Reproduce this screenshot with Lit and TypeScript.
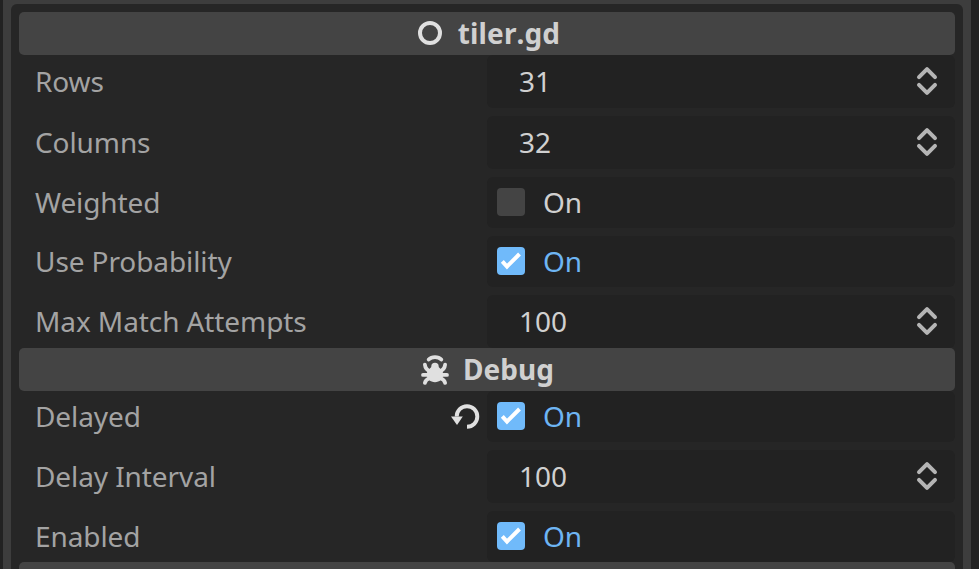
import { LitElement, html, css, svg, nothing } from "lit";
import { customElement, property } from "lit/decorators.js";

const icons = {
  node: svg`<circle cx="16" cy="16" r="10" fill="none" stroke="#e0e0e0" stroke-width="4"/>`,
  debug: svg`<g fill="none" stroke="#e0e0e0" stroke-width="3.8" stroke-linecap="round">
      <path d="M9.700 6.600C12.700 3.200 19.300 3.200 22.300 6.600"/>
      <path d="M5.900 11.600C6.200 15.400 8 17.500 12 18.500M26.100 11.600C25.800 15.400 24 17.500 20 18.500"/>
      <path d="M4 21.900H28"/>
      <path d="M5.900 29.900C6.200 27.600 8.500 26 11 25M26.100 29.900C25.800 27.600 23.500 26 21 25"/>
    </g>
    <path d="M12.300 13.500a3.700 3.700 0 0 1 7.400 0c0 1.700 4.500 3.300 4.500 8 0 4.300-3.600 7.700-8.200 7.700s-8.200-3.400-8.200-7.700c0-4.700 4.500-6.300 4.500-8z" fill="#e0e0e0"/>`,
};

@customElement("section-header")
class SectionHeader extends LitElement {
  @property() icon: keyof typeof icons | "" = "";
  @property() label = "";
  static styles = css`
    :host {
      display: flex;
      align-items: center;
      justify-content: center;
      height: 43px;
      flex: none;
      padding-right: 1px;
      border-radius: 5px;
      background: #444;
      color: #d0d0d0;
      font-weight: 700;
      font-kerning: none;
      gap: 12px;
      box-sizing: border-box;
    }
    :host([icon="node"]) { letter-spacing: 0.12px; padding-right: 0; }
    svg { width: 32px; height: 32px; flex: none; margin-bottom: 1px; }
    span { padding-bottom: 2px; }
  `;
  render() {
    return html`${this.icon ? html`<svg viewBox="0 0 32 32">${icons[this.icon]}</svg>` : nothing}<span>${this.label}</span>`;
  }
}

@customElement("property-row")
class PropertyRow extends LitElement {
  @property() label = "";
  @property({ attribute: false }) value: number | boolean = 0;
  @property({ type: Boolean }) changed = false;
  static styles = css`
    :host { display: flex; flex: none; }
    .name { width: 468px; box-sizing: border-box; padding: 0 7px 0 16px; display: flex; align-items: center; justify-content: space-between; color: #a3a3a3; letter-spacing: -0.09px; }
    .field { flex: 1; display: flex; align-items: center; border-radius: 6px; background: #222; color: #d0d0d0; }
    .number { height: 53px; padding: 0 16px 0 32px; justify-content: space-between; }
    .bool { height: 51px; padding-left: 10px; gap: 18px; }
    .checked { color: #6eb5f3; }
    .box { width: 28px; height: 28px; margin-bottom: 1px; border-radius: 4px; background: #444; }
    .checked .box { background: #70bafa; }
    span { padding-bottom: 2px; }
    svg { display: block; flex: none; }
    .revert, .spin { margin-bottom: 1px; }
  `;
  render() {
    const revert = html`<svg class="revert" width="30" height="30" viewBox="0 0 30 30">
      <path d="M6.700 15.500A10.300 10.300 0 1 1 17 25.800" fill="none" stroke="#e0e0e0" stroke-width="3.900"/>
      <path d="M1 15.500H12.800L7 24z" fill="#e0e0e0"/></svg>`;
    const field =
      typeof this.value === "boolean"
        ? html`<div class="field bool ${this.value ? "checked" : ""}">
            <div class="box">${this.value
              ? html`<svg width="28" height="28" viewBox="0 0 28 28"><path d="M5.300 14.400L10 19.500L22.500 7" fill="none" stroke="#fff" stroke-width="4"/></svg>`
              : nothing}</div><span>On</span></div>`
        : html`<div class="field number"><span>${this.value}</span>
            <svg class="spin" width="24" height="32" viewBox="0 0 24 32"><path d="M4 12.200L12 4.200L20 12.200M4 19.800L12 27.800L20 19.800" fill="none" stroke="#b5b5b5" stroke-width="4" stroke-linecap="round" stroke-linejoin="round"/></svg></div>`;
    return html`<div class="name"><span>${this.label}</span>${this.changed ? revert : nothing}</div>${field}`;
  }
}

type Row = [string, number | boolean, boolean?];

@customElement("app-root")
class AppRoot extends LitElement {
  static styles = css`
    :host {
      display: flex;
      width: 979px;
      height: 569px;
      box-sizing: border-box;
      padding: 0 8px 0 3px;
      overflow: hidden;
      background: #222;
      font: 28px/38px "Noto Sans", sans-serif;
    }
    .frame { flex: 1; padding: 4px 8px 0; background: #3d3d3d; }
    .inspector { height: 600px; box-sizing: border-box; padding: 8px 8px 0; border-radius: 6px 6px 0 0; background: #262626; }
    .rows { display: flex; flex-direction: column; gap: 8px; }
  `;
  private main: Row[] = [["Rows", 31], ["Columns", 32], ["Weighted", false], ["Use Probability", true], ["Max Match Attempts", 100]];
  private debug: Row[] = [["Delayed", true, true], ["Delay Interval", 100], ["Enabled", true]];
  private rows(list: Row[]) {
    return html`<div class="rows">${list.map(([l, v, c]) => html`<property-row .label=${l} .value=${v} .changed=${!!c}></property-row>`)}</div>`;
  }
  render() {
    return html`<div class="frame"><div class="inspector">
      <section-header icon="node" label="tiler.gd"></section-header>
      ${this.rows(this.main)}
      <section-header icon="debug" label="Debug"></section-header>
      ${this.rows(this.debug)}
      <section-header></section-header>
    </div></div>`;
  }
}
